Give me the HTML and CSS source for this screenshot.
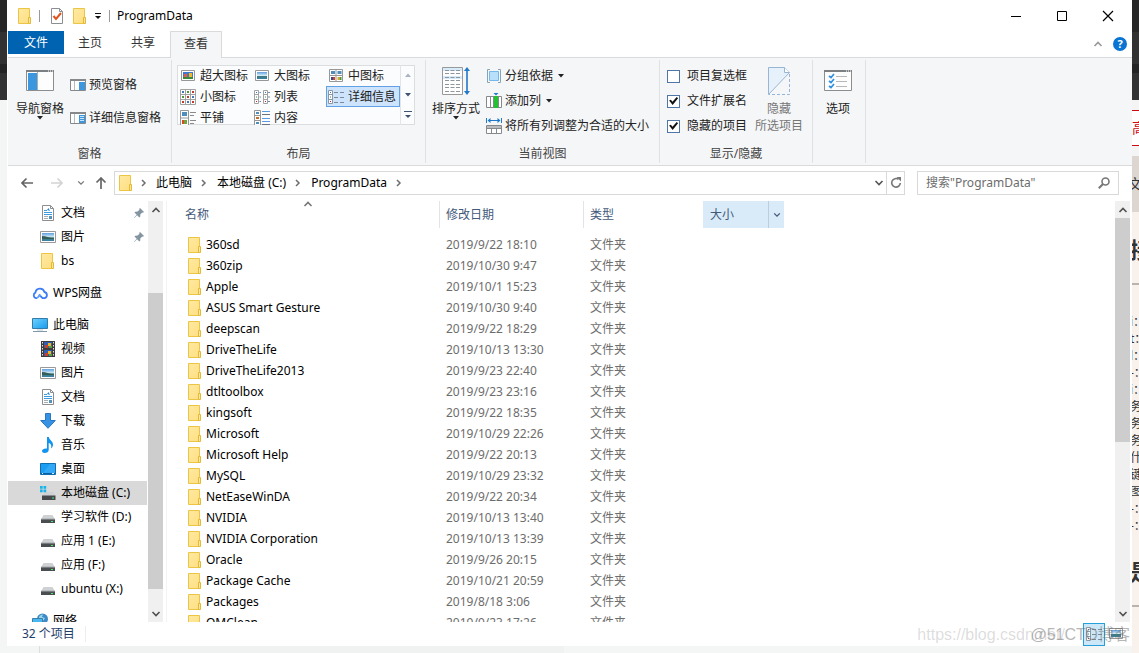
FILE: index.html
```html
<!DOCTYPE html>
<html lang="zh-CN">
<head>
<meta charset="utf-8">
<title>ProgramData</title>
<link rel="stylesheet" href="styles.css">
</head>
<body>
<svg class="defs" aria-hidden="true">
  <linearGradient id="g-folder" x1="0" y1="0" x2="1" y2="1"><stop offset="0" stop-color="#ffe9a3"/><stop offset="1" stop-color="#ffdf80"/></linearGradient>
  <linearGradient id="g-screen" x1="0" y1="0" x2="1" y2="1"><stop offset="0" stop-color="#6fd0fb"/><stop offset="1" stop-color="#169bf0"/></linearGradient>
  <linearGradient id="g-pic" x1="0" y1="0" x2="0" y2="1"><stop offset="0" stop-color="#5d9fe0"/><stop offset=".5" stop-color="#d3ecf5"/><stop offset=".6" stop-color="#3d7b78"/><stop offset="1" stop-color="#3c82a8"/></linearGradient>
  <symbol id="folder" viewBox="0 0 14 16"><path d="M.5.500h11v15H.5z" fill="url(#g-folder)" stroke="#ecc544"/><path d="M10.500 9.500h2v6h-2z" fill="#ffe699" stroke="#e3b93a"/></symbol>
  <symbol id="chev-r" viewBox="0 0 8 8"><path d="M2 1l3 3-3 3" fill="none" stroke="#6e6e6e" stroke-width="1.500"/></symbol>
  <symbol id="chev-d" viewBox="0 0 10 10"><path d="M1.500 3L5 6.500 8.500 3" fill="none" stroke="currentColor" stroke-width="1.600"/></symbol>
  <symbol id="chev-u" viewBox="0 0 10 10"><path d="M1.500 7L5 3.500 8.500 7" fill="none" stroke="currentColor" stroke-width="1.600"/></symbol>
  <symbol id="tri" viewBox="0 0 6 4"><path d="M0 0h6L3 3.500z" fill="currentColor"/></symbol>
  <symbol id="doc" viewBox="0 0 16 16"><path d="M2.500.5h8l3 3v12h-11z" fill="#fff" stroke="#8b8f92"/><path d="M10.500.5v3h3" fill="none" stroke="#8b8f92"/><path d="M4 5.500h3M4 7.500h8M4 9.500h8" stroke="#3c9ade"/><path d="M7 5l1.500-2L10 6z" fill="#2a88d2"/><path d="M4 11.500h4M4 13.500h4" stroke="#a7acb0"/><path d="M9 11h3v3H9z" fill="#5693b9"/></symbol>
  <symbol id="picture" viewBox="0 0 16 16"><path d="M.5 2.500h15v11H.5z" fill="#fff" stroke="#999"/><path d="M2 4h12v8H2z" fill="url(#g-pic)"/><path d="M2 7c4 0 7 2 12 2v1H2z" fill="#365d58"/></symbol>
  <symbol id="cloud" viewBox="0 0 16 16"><path d="M5 13.200H4a3 3 0 0 1-.6-5.600 4.600 4.600 0 0 1 9-.6 3.200 3.200 0 0 1 .2 6.200h-2L6.800 9.500" fill="none" stroke="#3d7cf5" stroke-width="1.800" stroke-linejoin="round"/><path d="M5 13.200l3.500-3.500" stroke="#62a0fb" stroke-width="1.800"/></symbol>
  <symbol id="pc" viewBox="0 0 16 16"><path d="M.5 1.500h15v10H.5z" fill="url(#g-screen)" stroke="#337ca9"/><path d="M5 12.500h6v1H5z" fill="#b9cbd6"/><path d="M1 14.500h14" stroke="#7f98a7"/></symbol>
  <symbol id="video" viewBox="0 0 16 16"><path d="M1 0h14v16H1z" fill="#3c3c40"/><path d="M2.500 1v14M13.500 1v14" stroke="#e5e5e5" stroke-dasharray="1.500 1.500"/><path d="M4 1h8v6H4zM4 9h8v6H4z" fill="#315faf"/><path d="M5 4h3v3H5zM5 12h3v3H5z" fill="#d23c22"/><path d="M8 2h3v3H8zM8 10h3v3H8z" fill="#f0b51d"/><path d="M9 5h3v2H9zM9 13h3v2H9z" fill="#58a03a"/></symbol>
  <symbol id="download" viewBox="0 0 16 16"><path d="M5.500.5h5v7h4.800L8 15.300.7 7.500h4.800z" fill="#3793e2" stroke="#2778c0"/></symbol>
  <symbol id="music" viewBox="0 0 16 16"><path d="M7 0h1.800c.4 3 4.200 4 4.200 7.500 0 2-1 3-2 4 .8-3.500-.2-5-2.300-5.500V13c0 2-2 3-4 3-1.500 0-2.700-.8-2.700-2 0-1.700 2.500-3 5-2.500z" fill="#1194ee"/></symbol>
  <symbol id="desktop" viewBox="0 0 16 16"><path d="M.5 2.500h15v11H.5z" fill="#1b9df2" stroke="#116fb1"/><path d="M10 3h5v9H3z" fill="#48b6fa" opacity=".5"/><path d="M1 12.500h14" stroke="#0a5ea5"/><path d="M2 12.500h1M12 12.500h2" stroke="#d6efff"/></symbol>
  <symbol id="drive" viewBox="0 0 16 16"><path d="M3.500 6h9L15 10.500H1z" fill="#cfd2d4"/><path d="M1 10h14v4H1z" fill="#4a4e50"/><path d="M1 10.200h14" stroke="#8e9294"/><path d="M11 12h2v1h-2z" fill="#4be86b"/></symbol>
  <symbol id="sysdrive" viewBox="0 0 16 16"><path d="M5 7h8l2.500 4H2z" fill="#cfd2d4"/><path d="M2 10.500h13.500V15H2z" fill="#45494b"/><path d="M12 12.500h2v1h-2z" fill="#4be86b"/><path d="M0 1h2.700v2.700H0zM3.500 1h2.700v2.700H3.500zM0 4.500h2.700v2.700H0zM3.500 4.500h2.700v2.700H3.500z" fill="#19b5ea"/></symbol>
  <symbol id="network" viewBox="0 0 16 16"><circle cx="10.500" cy="6" r="5.500" fill="#3d8bc6"/><path d="M7 4c1-2 3-2.500 4-2.500L10 4l3 1-2 3-4-1z" fill="#9bd2e6"/><path d="M.5 5.500h10v8H.5z" fill="#4ab6ef" stroke="#397fa9"/></symbol>
  <symbol id="pin" viewBox="0 0 12 12"><path d="M7 1l4 4-1 .8-.8-.3L7.300 7.400l-.1 2.300-.9.7-2.200-2.200L1 11.200.8 11l2.900-3.300L1.500 5.600l.8-.9 2.300-.1 1.900-1.900L6.200 2z" fill="#8494a0"/></symbol>
  <symbol id="xl" viewBox="0 0 16 16"><path d="M1.500 2.500h13v10h-13z" fill="#fff" stroke="#979797"/><path d="M3 4h10v7H3z" fill="#3e78d0"/><path d="M3 9h10v2H3z" fill="#3b8a3b"/><path d="M4 6h3v3H4z" fill="#e2603b"/><path d="M9 5h3v4H9z" fill="#f2b91d"/></symbol>
  <symbol id="lg" viewBox="0 0 16 16"><path d="M1.500 2.500h13v10h-13z" fill="#fff" stroke="#979797"/><path d="M3 4h10v7H3z" fill="url(#g-pic)"/></symbol>
  <symbol id="md" viewBox="0 0 16 16"><path d="M1.500 1.500h13v12h-13zM8 1v13M1 7.500h14" fill="#fff" stroke="#979797"/><path d="M3 3h4v3H3zM9.500 3h4v3h-4z" fill="#4f8dbd"/><path d="M3 9h2v3H3z" fill="#2c4a9b"/><path d="M5 9h2v3H5z" fill="#d7411d"/><path d="M9.500 9h2v3h-2z" fill="#e8a31c"/><path d="M11.500 9h2v3h-2z" fill="#4c963c"/></symbol>
  <symbol id="sm" viewBox="0 0 16 16"><path d="M.5.5h15v15H.5zM5.500 0v16M10.500 0v16M0 5.500h16M0 10.500h16" fill="#fff" stroke="#a2a2a2"/><path d="M2 2h2v2H2zM12 7h2v2h-2zM7 12h2v2H7z" fill="#4377bb"/><path d="M7 2h2v2H7zM2 7h2v2H2z" fill="#4c963c"/><path d="M12 2h2v2h-2zM7 7h2v2H7zM2 12h2v2H2zM12 12h2v2h-2z" fill="#c3392b"/></symbol>
  <symbol id="list" viewBox="0 0 16 16"><path d="M.5 1.500h4v13h-4zM9.500 1.500h4v13h-4zM0 5.500h5M0 10.500h5M9 5.500h5M9 10.500h5" fill="#fff" stroke="#a2a2a2"/><path d="M5.500 3.500H7M5.500 8H7M5.500 12.500H7M14 3.500h2M14 8h2M14 12.500h2" stroke="#7e8ca3"/><path d="M2 3h1v1H2zM11 3h1v1h-1z" fill="#3474c4"/><path d="M2 7.500h1v1H2zM11 7.500h1v1h-1z" fill="#389048"/><path d="M2 12h1v1H2zM11 12h1v1h-1z" fill="#c32626"/></symbol>
  <symbol id="details" viewBox="0 0 16 16"><path d="M.5 1.500h4v13h-4zM0 5.500h5M0 10.500h5" fill="#fff" stroke="#8d98a5"/><path d="M6 3.500h4M12 3.500h4M6 8.500h4M12 8.500h4M6 13.500h4M12 13.500h4" stroke="#7d8a99"/><path d="M2 3h1v1H2z" fill="#3474c4"/><path d="M2 7.500h1v1H2z" fill="#389048"/><path d="M2 12h1v1H2z" fill="#c32626"/></symbol>
  <symbol id="tiles" viewBox="0 0 16 16"><path d="M.5.500h8v15h-8zM0 8h9" fill="#fff" stroke="#979797"/><path d="M2 2h5v4H2z" fill="#4f8dbd"/><path d="M2 10h2v4H2z" fill="#d94b27"/><path d="M4 10h3v4H4z" fill="#6fa53a"/><path d="M10 2.500h6M10 5.500h4M10 10.500h6M10 13.500h4" stroke="#8b8b8b"/></symbol>
  <symbol id="content" viewBox="0 0 16 16"><path d="M.5.500h6v15h-6zM0 5.500h7M0 10.500h7" fill="#fff" stroke="#979797"/><path d="M2 2h3v2H2zM2 12h3v2H2z" fill="#4f8dbd"/><path d="M2 7h3v2H2z" fill="#c2702c"/><path d="M8 1.500h8M8 8.500h8M8 11.500h8" stroke="#5b9ae0"/><path d="M8 4.500h8M8 14.500h8" stroke="#6a7480"/></symbol>
</svg>

<div class="screen">
  <div class="edge-left"></div>
  <main class="window">
    <header class="titlebar">
      <svg class="i-folder"><use href="#folder"/></svg>
      <span class="bar"></span>
      <button class="plain" aria-label="属性"><svg class="i-prop" viewBox="0 0 12 16"><path d="M.5.500h8l3 3v12H.5z" fill="#fff" stroke="#8b8f92"/><path d="M8.500.5v3h3" fill="none" stroke="#8b8f92"/><path d="M2.500 8l2.500 3 5-6" fill="none" stroke="#e2531f" stroke-width="2"/></svg></button>
      <button class="plain" aria-label="新建文件夹"><svg class="i-folder"><use href="#folder"/></svg></button>
      <button class="plain qat-more" aria-label="自定义快速访问工具栏"><svg viewBox="0 0 8 8"><path d="M1 1.500h6" stroke="#111"/><path d="M1 4h6L4 7z" fill="#111"/></svg></button>
      <span class="bar"></span>
      <h1 class="title">ProgramData</h1>
      <div class="caption">
        <button aria-label="最小化"><svg viewBox="0 0 12 12"><path d="M1 6.500h10" stroke="#000"/></svg></button>
        <button aria-label="最大化"><svg viewBox="0 0 12 12"><path d="M1.500 1.500h9v9h-9z" fill="none" stroke="#000"/></svg></button>
        <button aria-label="关闭"><svg viewBox="0 0 12 12"><path d="M1 1l10 10M11 1L1 11" stroke="#000" stroke-width="1.200"/></svg></button>
      </div>
    </header>

    <nav class="tabs">
      <button class="tab file">文件</button>
      <button class="tab">主页</button>
      <button class="tab">共享</button>
      <button class="tab active">查看</button>
      <div class="tab-tools">
        <button class="plain collapse" aria-label="最小化功能区"><svg class="i10"><use href="#chev-u"/></svg></button>
        <button class="help" aria-label="帮助">?</button>
      </div>
    </nav>

    <section class="ribbon">
      <div class="group">
        <div class="group-body">
          <button class="big nav-pane"><svg class="i-big" viewBox="0 0 28 29"><path d="M.5 3.500h27v20H.5z" fill="#fdfdfd" stroke="#8a8e91"/><path d="M0 3h28v2H0z" fill="#7c8083"/><path d="M2 6h9v17H2z" fill="#3c97df"/><path d="M11.500 5v18" stroke="#a9adb0"/><path d="M22 4h1M24 4h1M26 4h1" stroke="#fff"/></svg><span>导航窗格</span><svg class="tri"><use href="#tri"/></svg></button>
          <div class="pane-list">
            <button class="small"><svg class="i16" viewBox="0 0 16 16"><path d="M.5 2.500h15v11H.5z" fill="#fff" stroke="#85898c"/><path d="M0 2h16v2H0z" fill="#85898c"/><path d="M4.500 4v9" stroke="#b8bbbd"/><path d="M9 5h6v8H9z" fill="#3c97df"/></svg>预览窗格</button>
            <button class="small"><svg class="i16" viewBox="0 0 16 16"><path d="M.5 2.500h15v11H.5z" fill="#fff" stroke="#85898c"/><path d="M0 2h16v2H0z" fill="#85898c"/><path d="M4.500 4v9" stroke="#b8bbbd"/><path d="M9 5h6v8H9z" fill="#3c97df"/><path d="M10 6.500h4M10 8.500h4M10 10.500h4" stroke="#c9e5fa"/></svg>详细信息窗格</button>
          </div>
        </div>
        <h2>窗格</h2>
      </div>

      <div class="group">
        <div class="group-body">
          <div class="gallery">
            <div class="gallery-grid">
              <button><svg class="i16"><use href="#xl"/></svg>超大图标</button>
              <button><svg class="i16"><use href="#lg"/></svg>大图标</button>
              <button><svg class="i16"><use href="#md"/></svg>中图标</button>
              <button><svg class="i16"><use href="#sm"/></svg>小图标</button>
              <button><svg class="i16"><use href="#list"/></svg>列表</button>
              <button class="selected"><svg class="i16"><use href="#details"/></svg>详细信息</button>
              <button><svg class="i16"><use href="#tiles"/></svg>平铺</button>
              <button><svg class="i16"><use href="#content"/></svg>内容</button>
            </div>
            <div class="gallery-scroll">
              <button class="off" aria-label="上一行"><svg class="tri flip"><use href="#tri"/></svg></button>
              <button aria-label="下一行"><svg class="tri"><use href="#tri"/></svg></button>
              <button aria-label="更多"><svg class="i-more" viewBox="0 0 8 8"><path d="M0 .5h8" stroke="currentColor"/><path d="M1 4h6L4 7z" fill="currentColor"/></svg></button>
            </div>
          </div>
        </div>
        <h2>布局</h2>
      </div>

      <div class="group">
        <div class="group-body">
          <button class="big sort"><svg class="i-big" viewBox="0 0 28 29"><path d="M.5.500h20v27H.5z" fill="#fff" stroke="#999"/><path d="M1 1h19v3H1zM1 9h19v3H1z" fill="#d7ecfa"/><path d="M3 3.500h15M3 6.500h15M3 10.500h15M3 13.500h15M3 17.500h15M3 20.500h15M3 24.500h15" stroke="#8d969d" stroke-dasharray="4 1.500"/><path d="M25 3v22" stroke="#2179c9" stroke-width="1.600"/><path d="M22 4l3-4 3 4zM22 24l3 4 3-4z" fill="#2179c9"/></svg><span>排序方式</span><svg class="tri"><use href="#tri"/></svg></button>
          <div class="stack">
            <button class="small"><svg class="i16" viewBox="0 0 16 16"><path d="M4 1.500H1.500v13H4M12 1.500h2.500v13H12" fill="none" stroke="#89a4b8"/><path d="M3.500 3.500h9v9h-9z" fill="#b9e0fb" stroke="#74b9ec"/></svg>分组依据<svg class="tri"><use href="#tri"/></svg></button>
            <button class="small"><svg class="i16" viewBox="0 0 16 16"><path d="M.5 3.500h15v11H.5zM4.500 3v12" fill="#fff" stroke="#85898c"/><path d="M8 3h4v12H8z" fill="#23c232"/><path d="M7.500 4v10M12.500 4v10" stroke="#85898c"/><path d="M7.500 0h5L10 2.500z" fill="#2179c9"/></svg>添加列<svg class="tri"><use href="#tri"/></svg></button>
            <button class="small"><svg class="i16" viewBox="0 0 16 16"><path d="M.5 0v5M15.500 0v5M2 2.500h12" stroke="#2179c9"/><path d="M1.500 2.500l3-2.500v5zM14.500 2.500l-3-2.500v5z" fill="#2179c9"/><path d="M.5 7.500h15v8H.5zM0 10.500h16M5.500 10v6M10.500 10v6" fill="#fff" stroke="#85898c"/><path d="M1 8h14v2H1z" fill="#b9bcbe"/></svg>将所有列调整为合适的大小</button>
          </div>
        </div>
        <h2>当前视图</h2>
      </div>

      <div class="group">
        <div class="group-body">
          <div class="stack checks">
            <label><input type="checkbox">项目复选框</label>
            <label><input type="checkbox" checked>文件扩展名</label>
            <label><input type="checkbox" checked>隐藏的项目</label>
          </div>
          <button class="big hide" disabled><svg class="i-hide" viewBox="0 0 22 29"><path d="M.5.500h16l5 5L.5 27.500z" fill="#e7f1fb" stroke="#98b5d6"/><path d="M16.500.5v5h5" fill="#fff" stroke="#98b5d6"/><path d="M21.500 7v20.500H1" fill="none" stroke="#98b5d6" stroke-dasharray="3 2"/></svg><span>隐藏</span><span>所选项目</span></button>
        </div>
        <h2>显示/隐藏</h2>
      </div>

      <div class="group">
        <div class="group-body">
          <button class="big options"><svg class="i-big" viewBox="0 0 28 29"><path d="M.5 3.500h27v20H.5z" fill="#fdfdfd" stroke="#8a8e91"/><path d="M0 3h28v2H0z" fill="#7c8083"/><path d="M22 4h1M24 4h1M26 4h1" stroke="#fff"/><path d="M5 9l2 1.500L10 7M5 14l2 1.500L10 12M5 19l2 1.500L10 17" fill="none" stroke="#2f8fe0" stroke-width="1.700"/><path d="M12 9.500h11M12 14.500h11M12 19.500h11" stroke="#b5b8ba"/></svg><span>选项</span></button>
        </div>
      </div>
    </section>

    <div class="navrow">
      <button class="plain arrow" aria-label="后退"><svg viewBox="0 0 12 12"><path d="M12 6H1M5.500 1.500L1 6l4.500 4.500" fill="none" stroke="#666" stroke-width="1.700"/></svg></button>
      <button class="plain arrow fwd" aria-label="前进" disabled><svg viewBox="0 0 12 12"><path d="M0 6h11M6.500 1.500L11 6l-4.500 4.500" fill="none" stroke="#d4d4d4" stroke-width="1.700"/></svg></button>
      <button class="plain recent" aria-label="最近位置"><svg class="i8"><use href="#chev-d"/></svg></button>
      <button class="plain arrow" aria-label="上移"><svg viewBox="0 0 12 12"><path d="M6 12V1M1.500 5.500L6 1l4.500 4.500" fill="none" stroke="#666" stroke-width="1.700"/></svg></button>
      <div class="address">
        <svg class="i-folder"><use href="#folder"/></svg>
        <svg class="i8"><use href="#chev-r"/></svg>
        <button class="plain">此电脑</button>
        <svg class="i8"><use href="#chev-r"/></svg>
        <button class="plain">本地磁盘 (C:)</button>
        <svg class="i8"><use href="#chev-r"/></svg>
        <button class="plain">ProgramData</button>
        <svg class="i8"><use href="#chev-r"/></svg>
        <button class="plain drop" aria-label="以前的位置"><svg class="i10"><use href="#chev-d"/></svg></button>
        <button class="plain refresh" aria-label="刷新"><svg viewBox="0 0 12 12"><path d="M8.500 2.300A4.300 4.300 0 1 0 10.300 6" fill="none" stroke="#777" stroke-width="1.600"/><path d="M6.500 0h4.500v4.500z" fill="#777"/></svg></button>
      </div>
      <div class="search">
        <input type="text" aria-label="搜索" placeholder='搜索"ProgramData"'>
        <svg viewBox="0 0 12 12"><circle cx="7.500" cy="4.500" r="3.500" fill="none" stroke="#777" stroke-width="1.600"/><path d="M5 7L.8 11.200" stroke="#777" stroke-width="2"/></svg>
      </div>
    </div>

    <div class="content">
      <nav class="tree">
        <a href="#" class="sub"><svg class="i16"><use href="#doc"/></svg>文档<svg class="pin"><use href="#pin"/></svg></a>
        <a href="#" class="sub"><svg class="i16"><use href="#picture"/></svg>图片<svg class="pin"><use href="#pin"/></svg></a>
        <a href="#" class="sub"><svg class="i16"><use href="#folder"/></svg>bs</a>
        <a href="#" class="top"><svg class="i16"><use href="#cloud"/></svg>WPS网盘</a>
        <a href="#" class="top"><svg class="i16"><use href="#pc"/></svg>此电脑</a>
        <a href="#" class="sub"><svg class="i16"><use href="#video"/></svg>视频</a>
        <a href="#" class="sub"><svg class="i16"><use href="#picture"/></svg>图片</a>
        <a href="#" class="sub"><svg class="i16"><use href="#doc"/></svg>文档</a>
        <a href="#" class="sub"><svg class="i16"><use href="#download"/></svg>下载</a>
        <a href="#" class="sub"><svg class="i16"><use href="#music"/></svg>音乐</a>
        <a href="#" class="sub"><svg class="i16"><use href="#desktop"/></svg>桌面</a>
        <a href="#" class="sub current"><svg class="i16"><use href="#sysdrive"/></svg>本地磁盘 (C:)</a>
        <a href="#" class="sub"><svg class="i16"><use href="#drive"/></svg>学习软件 (D:)</a>
        <a href="#" class="sub"><svg class="i16"><use href="#drive"/></svg>应用 1 (E:)</a>
        <a href="#" class="sub"><svg class="i16"><use href="#drive"/></svg>应用 (F:)</a>
        <a href="#" class="sub"><svg class="i16"><use href="#drive"/></svg>ubuntu (X:)</a>
        <a href="#" class="top"><svg class="i16"><use href="#network"/></svg>网络</a>
      </nav>
      <div class="scroll tree-scroll">
        <button aria-label="向上滚动"><svg class="i10"><use href="#chev-u"/></svg></button>
        <div class="track"><div class="thumb"></div></div>
        <button aria-label="向下滚动"><svg class="i10"><use href="#chev-d"/></svg></button>
      </div>
      <div class="files">
        <table>
          <colgroup><col class="c-name"><col class="c-date"><col class="c-type"><col class="c-size"><col></colgroup>
          <thead>
            <tr><th class="sorted">名称<svg class="i10 asc"><use href="#chev-u"/></svg></th><th>修改日期</th><th>类型</th><th class="hot"><div><span>大小</span><button aria-label="筛选大小"><svg class="i8"><use href="#chev-d"/></svg></button></div></th><th></th></tr>
          </thead>
          <tbody>
            <tr><td><svg class="i-folder"><use href="#folder"/></svg>360sd</td><td>2019/9/22 18:10</td><td>文件夹</td><td></td><td></td></tr>
            <tr><td><svg class="i-folder"><use href="#folder"/></svg>360zip</td><td>2019/10/30 9:47</td><td>文件夹</td><td></td><td></td></tr>
            <tr><td><svg class="i-folder"><use href="#folder"/></svg>Apple</td><td>2019/10/1 15:23</td><td>文件夹</td><td></td><td></td></tr>
            <tr><td><svg class="i-folder"><use href="#folder"/></svg>ASUS Smart Gesture</td><td>2019/10/30 9:40</td><td>文件夹</td><td></td><td></td></tr>
            <tr><td><svg class="i-folder"><use href="#folder"/></svg>deepscan</td><td>2019/9/22 18:29</td><td>文件夹</td><td></td><td></td></tr>
            <tr><td><svg class="i-folder"><use href="#folder"/></svg>DriveTheLife</td><td>2019/10/13 13:30</td><td>文件夹</td><td></td><td></td></tr>
            <tr><td><svg class="i-folder"><use href="#folder"/></svg>DriveTheLife2013</td><td>2019/9/23 22:40</td><td>文件夹</td><td></td><td></td></tr>
            <tr><td><svg class="i-folder"><use href="#folder"/></svg>dtltoolbox</td><td>2019/9/23 23:16</td><td>文件夹</td><td></td><td></td></tr>
            <tr><td><svg class="i-folder"><use href="#folder"/></svg>kingsoft</td><td>2019/9/22 18:35</td><td>文件夹</td><td></td><td></td></tr>
            <tr><td><svg class="i-folder"><use href="#folder"/></svg>Microsoft</td><td>2019/10/29 22:26</td><td>文件夹</td><td></td><td></td></tr>
            <tr><td><svg class="i-folder"><use href="#folder"/></svg>Microsoft Help</td><td>2019/9/22 20:13</td><td>文件夹</td><td></td><td></td></tr>
            <tr><td><svg class="i-folder"><use href="#folder"/></svg>MySQL</td><td>2019/10/29 23:32</td><td>文件夹</td><td></td><td></td></tr>
            <tr><td><svg class="i-folder"><use href="#folder"/></svg>NetEaseWinDA</td><td>2019/9/22 20:34</td><td>文件夹</td><td></td><td></td></tr>
            <tr><td><svg class="i-folder"><use href="#folder"/></svg>NVIDIA</td><td>2019/10/13 13:40</td><td>文件夹</td><td></td><td></td></tr>
            <tr><td><svg class="i-folder"><use href="#folder"/></svg>NVIDIA Corporation</td><td>2019/10/13 13:39</td><td>文件夹</td><td></td><td></td></tr>
            <tr><td><svg class="i-folder"><use href="#folder"/></svg>Oracle</td><td>2019/9/26 20:15</td><td>文件夹</td><td></td><td></td></tr>
            <tr><td><svg class="i-folder"><use href="#folder"/></svg>Package Cache</td><td>2019/10/21 20:59</td><td>文件夹</td><td></td><td></td></tr>
            <tr><td><svg class="i-folder"><use href="#folder"/></svg>Packages</td><td>2019/8/18 3:06</td><td>文件夹</td><td></td><td></td></tr>
            <tr><td><svg class="i-folder"><use href="#folder"/></svg>QMClean</td><td>2019/9/23 17:26</td><td>文件夹</td><td></td><td></td></tr>
          </tbody>
        </table>
      </div>
      <div class="scroll file-scroll">
        <button aria-label="向上滚动"><svg class="i10"><use href="#chev-u"/></svg></button>
        <div class="track"><div class="thumb"></div></div>
        <button aria-label="向下滚动"><svg class="i10"><use href="#chev-d"/></svg></button>
      </div>
    </div>

    <footer class="status">
      <span class="count">32 个项目</span>
      <div class="views">
        <button class="on" aria-label="详细信息"><svg class="i16"><use href="#details"/></svg></button>
        <button aria-label="大缩略图"><svg class="i16"><use href="#lg"/></svg></button>
      </div>
      <span class="mark url">https://blog.csdn.net/</span>
      <span class="mark site">@51CTO博客</span>
    </footer>
  </main>

  <aside class="edge-right">
    <div class="dark"></div>
    <div class="red-box"><span>高</span></div>
    <div class="tag">文</div>
    <div class="article">
      <b>接</b>
      <hr>
      <ul><li>i：</li><li>t：</li><li>l：</li><li>-：</li><li>i：</li><li>务</li><li>务</li><li>务</li><li>什</li><li>键</li><li>图</li><li>-：</li><li>-：</li></ul>
      <b>是</b>
      <hr>
    </div>
  </aside>
  <div class="edge-bottom"><span></span></div>
</div>
</body>
</html>
```
FILE: styles.css
```css
* { box-sizing: border-box; }
body {
  margin: 0;
  background: #f4f5f5;
  color: #000;
  font: 12px/16px "Noto Sans", "Noto Sans CJK SC", sans-serif;
  overflow: hidden;
}
button, input { font: inherit; color: inherit; }
button { border: 0; padding: 0; background: none; }
svg { display: block; flex: none; }
h1, h2 { margin: 0; font: inherit; }
.defs { position: absolute; width: 0; height: 0; }

.screen {
  display: grid;
  grid-template: minmax(0, 1fr) 7px / 7px minmax(0, 1fr) 7px;
  height: 100vh;
}
.window {
  display: flex;
  flex-direction: column;
  min-height: 0;
  padding-left: 1px;
  background: #fff;
}

.i8 { width: 8px; height: 8px; }
.i10 { width: 10px; height: 10px; }
.i16 { width: 16px; height: 16px; }
.i-folder { width: 14px; height: 16px; }
.tri { width: 6px; height: 4px; }
.flip { transform: rotate(180deg); }
.plain { display: flex; align-items: center; white-space: nowrap; }

/* title bar */
.titlebar { display: flex; align-items: center; height: 31px; flex: none; padding-left: 10px; }
.bar { width: 1px; height: 12px; margin: 0 11px 0 7px; background: #9a9a9a; }
.titlebar .plain { margin-right: 10px; }
.titlebar .qat-more { margin: 0 0 0 -3px; }
.i-prop { width: 12px; height: 16px; }
.qat-more svg { width: 8px; height: 8px; }
.qat-more + .bar { margin-right: 7px; }
.caption { display: flex; align-self: stretch; margin-left: auto; padding-right: 1px; }
.caption button { display: flex; align-items: center; justify-content: center; width: 46px; }
.caption svg { width: 12px; height: 12px; }

/* tabs */
.tabs { display: flex; gap: 1px; height: 27px; flex: none; border-bottom: 1px solid #d9dadb; }
.tab { width: 52px; height: 24px; color: #333; }
.tab.file { width: 56px; margin-right: -1px; height: 23px; background: #0063b1; color: #fff; }
.tab.active { height: 27px; padding-bottom: 2px; border: 1px solid #d9dadb; border-bottom: 0; background: #f5f6f7; }
.tab-tools { display: flex; align-items: center; gap: 10px; margin-left: auto; padding-right: 5px; }
.collapse { color: #999; }
.help { width: 14px; height: 14px; border-radius: 50%; background: #0a74d4; color: #fff; font-weight: 700; font-size: 11px; line-height: 14px; }

/* ribbon */
.ribbon { display: flex; height: 108px; flex: none; padding: 2px 0; background: #f5f6f7; border-bottom: 1px solid #d9dadb; }
.group { display: flex; flex-direction: column; padding-top: 5px; border-right: 1px solid #e0e1e3; color: #222; }
.group-body { display: flex; flex: 1; }
.group h2 { padding-bottom: 1px; text-align: center; color: #444; }
.big { display: flex; flex-direction: column; align-items: center; padding-top: 2px; white-space: nowrap; }
.big span { height: 17px; margin-top: 4px; line-height: 17px; }
.big span + span { margin-top: 0; }
.big .tri { margin-top: -1px; }
.i-big { width: 28px; height: 29px; }
.i-hide { width: 22px; height: 29px; }
.small { display: flex; align-items: center; gap: 3px; height: 16px; white-space: nowrap; }
.small .tri { margin-left: 2px; }
.nav-pane { padding-left: 8px; }
.pane-list { display: flex; flex-direction: column; gap: 17px; padding: 12px 10px 0 6px; }
.stack { display: flex; flex-direction: column; gap: 9px; padding: 3px 10px 0 6px; }
.sort { padding-left: 6px; }
.checks { padding-left: 7px; padding-right: 0; }
.checks label { display: flex; align-items: center; gap: 7px; height: 16px; white-space: nowrap; }
.checks input {
  appearance: none;
  display: grid;
  place-items: center;
  width: 13px;
  height: 13px;
  margin: 0;
  border: 1px solid #5076a8;
  background: #fff;
}
.checks input:checked::before {
  content: "";
  width: 9px;
  height: 8px;
  background: #111;
  clip-path: polygon(0 45%, 20% 35%, 38% 58%, 85% 0, 100% 15%, 40% 100%);
}
.hide { padding-left: 8px; padding-right: 9px; color: #777; }
.options { padding-left: 11px; padding-right: 13px; }

.gallery { display: flex; height: 60px; margin: 0 10px 0 5px; box-shadow: inset 0 0 0 1px #dcdddf; background: #fbfcfd; }
.gallery-grid { display: grid; grid-template-columns: repeat(3, 74px); grid-auto-rows: 21px; height: 60px; padding-left: 1px; overflow: hidden; }
.gallery-grid button { display: flex; align-items: center; gap: 4px; padding-left: 2px; white-space: nowrap; }
.gallery-grid .selected { border: 1px solid #62a2e4; padding-left: 1px; background: #cde4fc; }
.gallery-scroll { display: flex; flex-direction: column; width: 15px; border-left: 1px solid #e3e4e6; color: #41546f; }
.gallery-scroll button { flex: 1; display: grid; place-items: center; }
.gallery-scroll .off { color: #aab2bd; }
.i-more { width: 8px; height: 8px; }

/* navigation row */
.navrow { display: flex; align-items: center; height: 35px; flex: none; padding: 0 13px 2px; }
.arrow svg { width: 12px; height: 12px; }
.fwd { margin-left: 18px; }
.recent { margin: 0 10px 0 14px; color: #777; }
.address { display: flex; align-items: center; flex: 1; height: 24px; margin: 0 12px 0 7px; padding-left: 4px; border: 1px solid #d9d9d9; }
.address > .i8 { margin: 0 9px 0 8px; }
.address > .i-folder + .i8 { margin: 0 8px 0 7px; }
.address .drop { height: 22px; margin-left: auto; padding-right: 2px; color: #555; }
.refresh { height: 22px; padding: 0 2px 0 3px; border-left: 1px solid #d9d9d9; }
.refresh svg { width: 12px; height: 12px; }
.search { display: flex; align-items: center; width: 202px; height: 24px; padding: 0 8px; border: 1px solid #d9d9d9; }
.search input { flex: 1; min-width: 0; padding: 0; border: 0; background: none; }
.search input::placeholder { color: #6d6d6d; opacity: 1; }
.search svg { width: 12px; height: 12px; }

/* tree */
.content { display: flex; flex: 1; min-height: 0; overflow: hidden; }
.tree { width: 140px; flex: none; }
.tree a { display: flex; align-items: center; gap: 5px; height: 24px; padding-right: 3px; color: #000; text-decoration: none; white-space: nowrap; }
.tree .sub { padding-left: 32px; }
.tree .top { margin-top: 8px; padding-left: 24px; }
.tree .current { margin-right: 1px; background: #d9d9d9; }
.pin { width: 12px; height: 12px; margin-left: auto; }

/* scroll bars */
.scroll { display: flex; flex-direction: column; width: 15px; flex: none; background: #f0f0f0; color: #505050; }
.scroll button { display: grid; place-items: center; height: 17px; }
.track { flex: 1; }
.thumb { background: #cdcdcd; }
.tree-scroll .track { padding-top: 75px; }
.tree-scroll .thumb { height: 95%; }
.file-scroll { margin-right: 2px; }
.file-scroll .thumb { height: 58%; }

/* file list */
.files { flex: 1; min-width: 0; margin-left: 3px; border-left: 1px solid #f3f3f3; }
.files table { width: 100%; table-layout: fixed; border-collapse: separate; border-spacing: 0; }
.c-name { width: 273px; }
.c-date { width: 144px; }
.c-type { width: 119px; }
.c-size { width: 81px; }
.files th { position: relative; height: 27px; padding: 0 0 0 6px; text-align: left; font-weight: 400; color: #44597a; }
.files th:nth-child(-n+2) { border-right: 1px solid #e3e4e6; }
.files th.sorted { padding-left: 18px; }
.asc { position: absolute; top: -2px; left: 50%; color: #777; }
.files th.hot { padding: 0; background: #d9ebf9; }
.hot div { display: flex; height: 27px; }
.hot span { flex: 1; padding-left: 7px; line-height: 27px; }
.hot button { display: grid; place-items: center; width: 16px; border-left: 1px solid #b9cfdf; }
.files thead::after { content: ""; display: block; height: 6px; }
.files td { height: 21px; padding: 0 0 0 6px; color: #6d6d6d; white-space: nowrap; }
.files td:first-child { display: flex; align-items: center; gap: 4px; padding-left: 21px; color: #000; }

/* status bar */
.status { position: relative; display: flex; align-items: center; height: 24px; flex: none; padding-left: 14px; color: #1d3d68; }
.count { padding-right: 10px; border-right: 1px solid #eee; }
.views { display: flex; margin-left: auto; padding-right: 6px; }
.views button { display: grid; place-items: center; width: 21px; height: 23px; }
.views .on { width: 22px; border: 1px solid #26a0da; background: #cce8f8; }
.mark { position: absolute; font: 16px/20px "Liberation Sans", "Noto Sans CJK SC", sans-serif; color: rgba(120, 120, 120, .26); white-space: nowrap; }
.url { right: 67px; top: 3px; }
.site { right: 2px; top: 3px; color: rgba(110, 110, 110, .5); }

/* page behind the window */
.edge-left { background: linear-gradient(#262626 32px, #323232 32px 64px, #242424 64px 73px, #323232 73px 100px, #f4f6f6 100px); }
.edge-right { overflow: hidden; background: #f4f4f4; color: #333; grid-row: 1 / 3; grid-column: 3; }
.dark { height: 100px; background: linear-gradient(#262626 32px, #323232 32px 64px, #242424 64px 73px, #323232 73px); }
.red-box { display: flex; align-items: center; height: 36px; margin: 10px 0; background: #fff; border: solid #ca0c16; border-width: 1px 0; color: #ca0c16; font-size: 14px; }
.tag { height: 56px; background: #ddd5d0; font-size: 14px; line-height: 56px; text-indent: -4px; }
.article { height: 100%; background: #f9f1ec; }
.article b { display: block; padding-top: 25px; font-size: 22px; line-height: 24px; text-indent: -2px; }
.article hr { height: 2px; margin: 22px 0 28px; border: 0; background: #bab2ad; }
.article ul { margin: 0; padding: 0; list-style: none; line-height: 17px; text-indent: -2px; white-space: nowrap; }
.edge-bottom { grid-column: 1 / 3; grid-row: 2; padding-left: 39px; background: #f4f5f5; }
.edge-bottom span { display: block; width: 48%; height: 7px; border-left: 1px solid #ddd; background: #f0f1f1; }
```
